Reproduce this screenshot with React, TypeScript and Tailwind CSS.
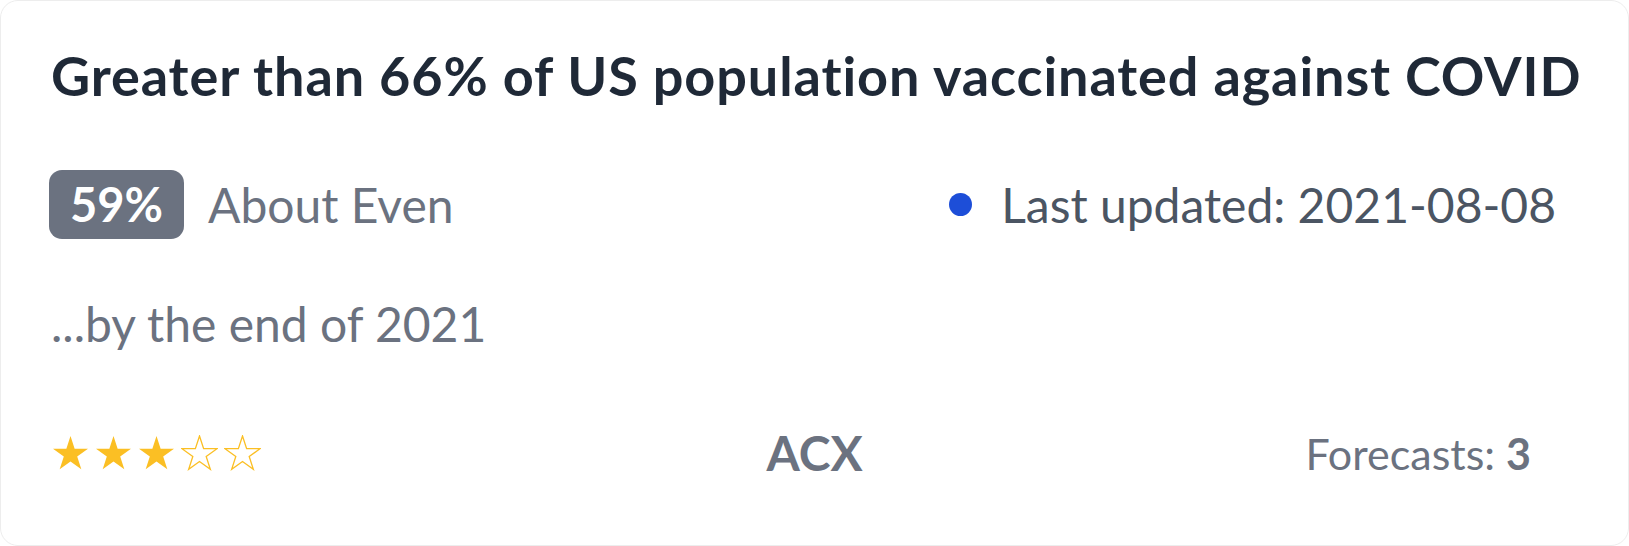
const STAR = "17.5,0 21.63,12.71 35,12.71 24.19,20.57 28.32,33.29 17.5,25.43 6.68,33.29 10.81,20.57 0,12.71 13.37,12.71";

const Star = ({ filled }: { filled: boolean }) => (
  <svg viewBox="-1 -1 37 36" className="w-[37px] h-[36px]" aria-hidden="true">
    <polygon
      points={STAR}
      fill={filled ? "#fbbf24" : "none"}
      stroke="#fbbf24"
      strokeWidth={filled ? 0 : 1.3}
      strokeLinejoin="miter"
    />
  </svg>
);

export default function App() {
  const stars = 3;
  return (
    <div className="w-full h-[546px] bg-white font-['Lato',sans-serif]">
      <div className="h-full bg-white rounded-[18px] border border-[#ededed] px-[50px] pt-[46px] flex flex-col">
        {/* Title */}
        <h1 className="text-[54px] leading-[58px] font-bold tracking-[0.9px] text-[#1f2937] whitespace-nowrap">
          Greater than 66% of US population vaccinated against COVID
        </h1>

        {/* Probability + updated */}
        <div className="mt-[65px] h-[69px] -ml-[2px] flex items-center justify-between">
          <div className="flex items-center gap-[24px]">
            <span className="h-[69px] w-[135px] rounded-[13px] bg-[#6b7280] text-white font-bold text-[47px] leading-none flex items-center justify-center">
              59%
            </span>
            <span className="text-[#6b7280] text-[48px] leading-none">About Even</span>
          </div>
          <div className="flex items-center gap-[29px] mr-[22px]">
            <span className="w-[23px] h-[23px] rounded-full bg-[#1d4ed8]" />
            <span className="text-[#4b5563] text-[48px] leading-none">Last updated: 2021-08-08</span>
          </div>
        </div>

        {/* Description */}
        <p className="mt-[58px] text-[48px] leading-[53px] text-[#6b7280]">...by the end of 2021</p>

        {/* Footer */}
        <div className="mt-[79px] h-[40px] grid grid-cols-3 items-center">
          <div className="flex items-center gap-[6px] ml-[1px]">
            {[0, 1, 2, 3, 4].map((i) => (
              <Star key={i} filled={i < stars} />
            ))}
          </div>
          <div className="text-center font-bold text-[48px] leading-none text-[#6b7280]">ACX</div>
          <div className="flex justify-end mr-[47px] text-[43px] leading-none text-[#6b7280]">
            Forecasts:&nbsp;<span className="font-bold">3</span>
          </div>
        </div>
      </div>
    </div>
  );
}
